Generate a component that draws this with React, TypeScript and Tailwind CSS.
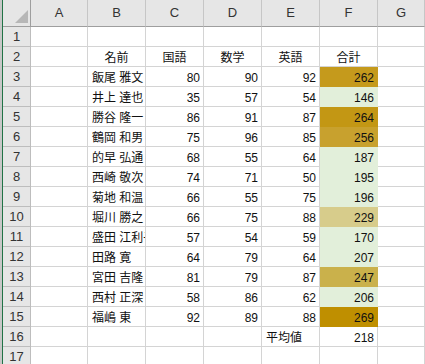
import { FC } from 'react'

const COLS = ['A', 'B', 'C', 'D', 'E', 'F', 'G']

type Row = [string, number, number, number, number, string]

// 名前, 国語, 数学, 英語, 合計, fill colour of 合計
const rows: Row[] = [
  ['飯尾 雅文', 80, 90, 92, 262, 'bg-[#c59a1c]'],
  ['井上 達也', 35, 57, 54, 146, 'bg-[#e2efda]'],
  ['勝谷 隆一', 86, 91, 87, 264, 'bg-[#c39714]'],
  ['鶴岡 和男', 75, 96, 85, 256, 'bg-[#c8a12e]'],
  ['的早 弘通', 68, 55, 64, 187, 'bg-[#e2efda]'],
  ['西崎 敬次', 74, 71, 50, 195, 'bg-[#e2efda]'],
  ['菊地 和温', 66, 55, 75, 196, 'bg-[#e2efda]'],
  ['堀川 勝之', 66, 75, 88, 229, 'bg-[#d7cc8b]'],
  ['盛田 江利子', 57, 54, 59, 170, 'bg-[#e2efda]'],
  ['田路 寛', 64, 79, 64, 207, 'bg-[#e2efda]'],
  ['宮田 吉隆', 81, 79, 87, 247, 'bg-[#cab14b]'],
  ['西村 正深', 58, 86, 62, 206, 'bg-[#e2efda]'],
  ['福嶋 東', 92, 89, 88, 269, 'bg-[#bf8f00]'],
]

const cell = 'h-[20px] border-r border-b border-[#d4d4d4] overflow-hidden whitespace-nowrap flex items-end pb-[2px] leading-none'
const num = cell + ' justify-end pr-[3px]'
const head = 'h-[20px] border-r border-b border-[#bdbdbd] bg-[#e6e6e6] flex items-center justify-center text-[#333] text-[13px] leading-none'

const Blank: FC = () => <div className={cell} />

const App: FC = () => {
  return (
    <div className="w-[425px] h-[364px] overflow-hidden bg-white text-[12px] text-[#111] border-l-[2px] border-l-[#c8c8c8]" style={{ fontFamily: '"Liberation Sans", "Noto Sans CJK JP", sans-serif' }}>
      <div className="grid grid-cols-[28px_57px_58px_58px_58px_58px_58px_1fr] border-l border-l-[#217346]">
        {/* column headers */}
        <div className="h-[27px] bg-[#e6e6e6] border-r border-b border-[#9e9e9e] flex items-end justify-end pr-[2px] pb-[3px]">
          <svg width="13" height="13" viewBox="0 0 13 13">
            <polygon points="13,0 13,13 0,13" fill="#b7b7b7" />
          </svg>
        </div>
        {COLS.map((c) => (
          <div key={c} className="h-[27px] bg-[#e6e6e6] border-r border-b border-r-[#c6c6c6] border-b-[#9e9e9e] flex items-center justify-center text-[13px] text-[#333]">
            {c}
          </div>
        ))}

        {/* row 1 */}
        <div className={head}>1</div>
        {COLS.map((c) => <Blank key={c} />)}

        {/* row 2 */}
        <div className={head}>2</div>
        <Blank />
        <div className={cell + ' justify-center'}>名前</div>
        <div className={cell + ' justify-center'}>国語</div>
        <div className={cell + ' justify-center'}>数学</div>
        <div className={cell + ' justify-center'}>英語</div>
        <div className={cell + ' justify-center'}>合計</div>
        <Blank />

        {rows.map((r, i) => (
          <div key={i} className="contents">
            <div className={head}>{i + 3}</div>
            <Blank />
            <div className={cell + ' pl-[4px]'}>{r[0]}</div>
            <div className={num}>{r[1]}</div>
            <div className={num}>{r[2]}</div>
            <div className={num}>{r[3]}</div>
            <div className={num + ' border-transparent ' + r[5]}>{r[4]}</div>
            <Blank />
          </div>
        ))}

        {/* row 16 */}
        <div className={head}>16</div>
        <Blank />
        <Blank />
        <Blank />
        <Blank />
        <div className={cell + ' pl-[4px]'}>平均値</div>
        <div className={num}>218</div>
        <Blank />

        {/* row 17 */}
        <div className={head}>17</div>
        {COLS.map((c) => <Blank key={c} />)}
      </div>
    </div>
  )
}

export default App
